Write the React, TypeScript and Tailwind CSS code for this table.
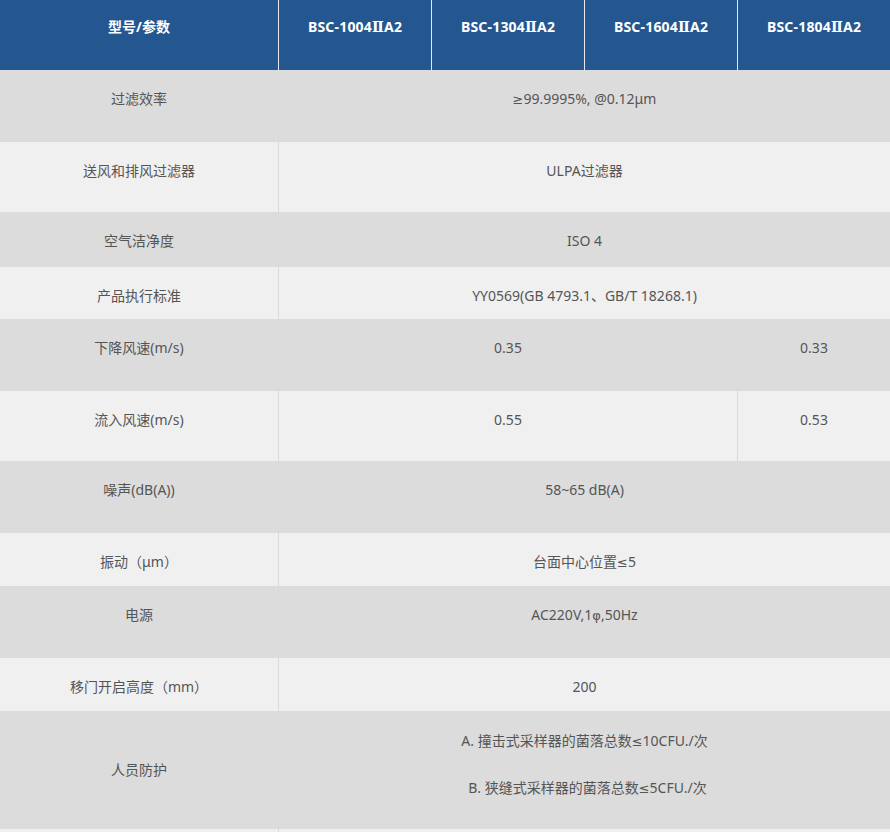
import React from "react";

const font = { fontFamily: '"Noto Sans", "Noto Sans CJK SC", sans-serif' };

const Sym = ({ c }: { c: string }) => (
  <span style={{ fontFamily: '"DejaVu Sans", sans-serif' }} className="text-[13px]">
    {c}
  </span>
);

const Roman = () => (
  <span style={{ fontFamily: '"DejaVu Serif", serif' }} className="text-[14px]">Ⅱ</span>
);

type Cell = { text: React.ReactNode; span?: number };
type Row = { label: string; h: string; cells: Cell[]; dark: boolean };

const rows: Row[] = [
  {
    label: "过滤效率",
    h: "h-[72px]",
    dark: true,
    cells: [{ text: <><Sym c="≥" />99.9995%, @0.12μm</>, span: 4 }],
  },
  { label: "送风和排风过滤器", h: "h-[70px]", dark: false, cells: [{ text: "ULPA过滤器", span: 4 }] },
  { label: "空气洁净度", h: "h-[55px]", dark: true, cells: [{ text: "ISO 4", span: 4 }] },
  { label: "产品执行标准", h: "h-[52px]", dark: false, cells: [{ text: "YY0569(GB 4793.1、GB/T 18268.1)", span: 4 }] },
  { label: "下降风速(m/s)", h: "h-[72px]", dark: true, cells: [{ text: "0.35", span: 3 }, { text: "0.33", span: 1 }] },
  { label: "流入风速(m/s)", h: "h-[70px]", dark: false, cells: [{ text: "0.55", span: 3 }, { text: "0.53", span: 1 }] },
  { label: "噪声(dB(A))", h: "h-[72px]", dark: true, cells: [{ text: "58~65 dB(A)", span: 4 }] },
  { label: "振动（μm）", h: "h-[53px]", dark: false, cells: [{ text: <>台面中心位置<Sym c="≤" />5</>, span: 4 }] },
  {
    label: "电源",
    h: "h-[72px]",
    dark: true,
    cells: [{ text: <>AC220V,1<span style={{ fontFamily: '"DejaVu Sans", sans-serif' }} className="text-[13px]">φ</span>,50Hz</>, span: 4 }],
  },
  { label: "移门开启高度（mm）", h: "h-[53px]", dark: false, cells: [{ text: "200", span: 4 }] },
];

const spanCls: Record<number, string> = {
  1: "col-span-1",
  3: "col-span-3",
  4: "col-span-4",
};

export default function App() {
  return (
    <div className="w-[890px] h-[832px] overflow-hidden bg-white text-[14px] text-[#555]" style={font}>
      <div className="grid grid-cols-[278px_153px_153px_153px_153px]">
        <div className="h-[70px] bg-[#245790] text-white font-bold flex justify-center pt-[17px] leading-[20px]">
          型号/参数
        </div>
        {["1004", "1304", "1604", "1804"].map((m) => (
          <div
            key={m}
            className="h-[70px] bg-[#245790] text-white font-bold flex justify-center pt-[17px] leading-[20px] border-l border-[#e8e8e8] whitespace-nowrap"
          >
            <span className="tracking-[0.2px]">
              BSC-{m}
              <Roman />
              A2
            </span>
          </div>
        ))}

        {rows.map((r) => {
          const bg = r.dark ? "bg-[#dcdcdc]" : "bg-[#f0f0f0]";
          return (
            <React.Fragment key={r.label}>
              <div className={`${r.h} ${bg} flex justify-center pt-[19px] leading-[20px]`}>{r.label}</div>
              {r.cells.map((c, i) => (
                <div
                  key={i}
                  className={`${r.h} ${bg} ${spanCls[c.span ?? 1]} border-l border-[#dadada] flex justify-center pt-[19px] leading-[20px]`}
                >
                  <span>{c.text}</span>
                </div>
              ))}
            </React.Fragment>
          );
        })}

        <div className="h-[118px] bg-[#dcdcdc] flex items-center justify-center leading-[20px]">人员防护</div>
        <div className="h-[118px] col-span-4 bg-[#dcdcdc] border-l border-[#dadada] flex flex-col items-center pt-[20px] leading-[20px] gap-[26px]">
          <div>A. 撞击式采样器的菌落总数<Sym c="≤" />10CFU./次</div>
          <div className="pl-[6px]">B. 狭缝式采样器的菌落总数<Sym c="≤" />5CFU./次</div>
        </div>

        <div className="h-[40px] bg-[#f0f0f0]"></div>
        <div className="h-[40px] col-span-4 bg-[#f0f0f0] border-l border-[#dadada]"></div>
      </div>
    </div>
  );
}
